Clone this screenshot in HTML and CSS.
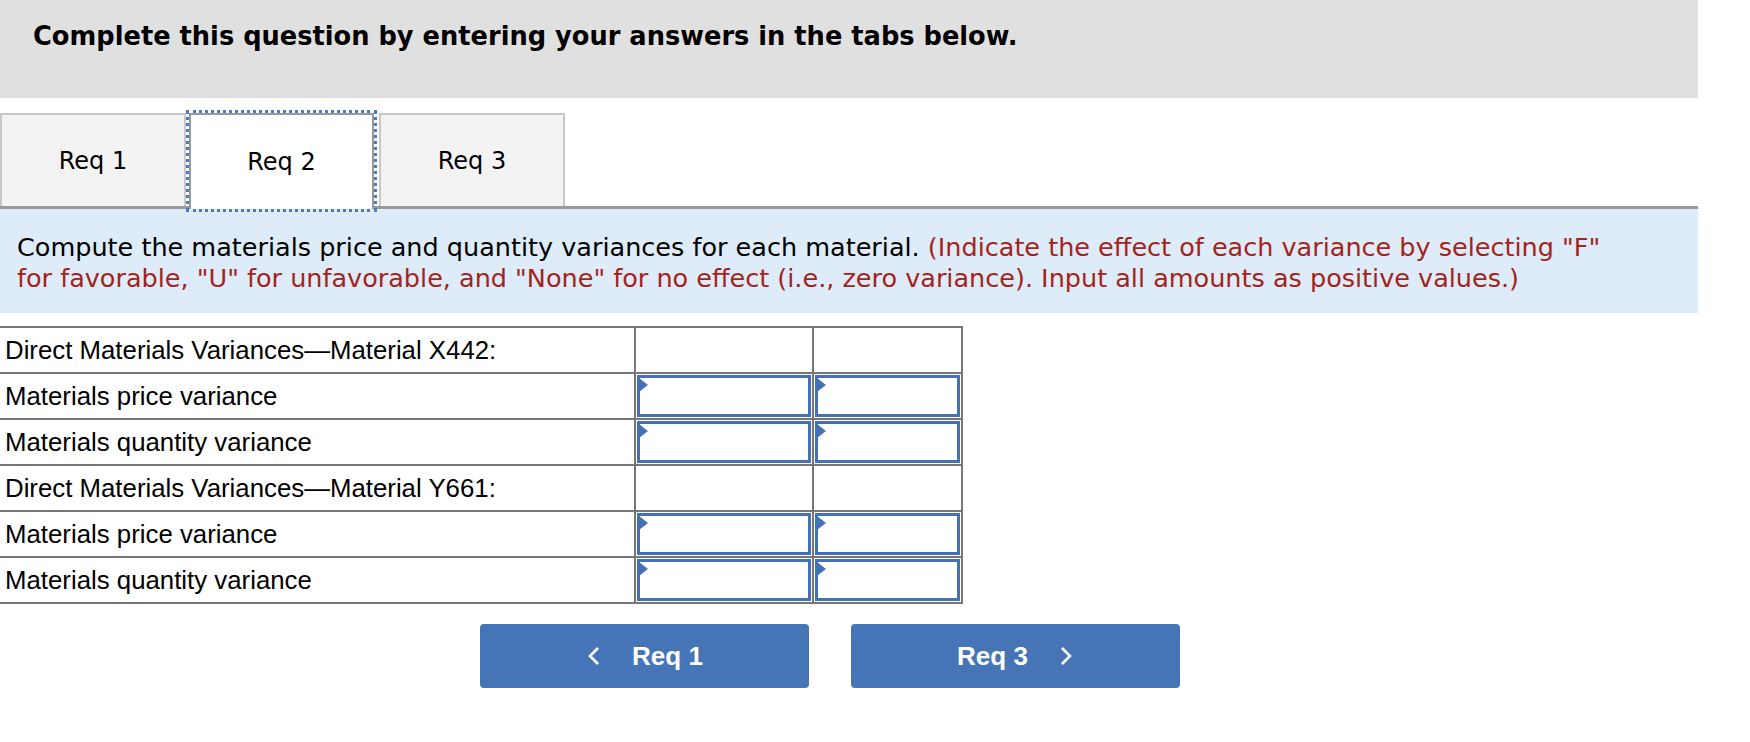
FILE: index.html
```html
<!DOCTYPE html>
<html>
<head>
<meta charset="utf-8">
<link rel="stylesheet" href="styles.css">
</head>
<body>
<div class="page">
  <div class="header">
    <h1 class="title">Complete this question by entering your answers in the tabs below.</h1>
  </div>
  <div class="tabs">
    <div class="tab">Req 1</div>
    <div class="tab active">Req 2</div>
    <div class="tab">Req 3</div>
  </div>
  <div class="instructions">
    <span class="black">Compute the materials price and quantity variances for each material.</span> <span class="red">(Indicate the effect of each variance by selecting "F" for favorable, "U" for unfavorable, and "None" for no effect (i.e., zero variance). Input all amounts as positive values.)</span>
  </div>
  <table class="grid">
    <tr><td class="label">Direct Materials Variances—Material X442:</td><td class="c2"></td><td class="c3"></td></tr>
    <tr><td class="label">Materials price variance</td><td class="c2"><div class="input"></div></td><td class="c3"><div class="input"></div></td></tr>
    <tr><td class="label">Materials quantity variance</td><td class="c2"><div class="input"></div></td><td class="c3"><div class="input"></div></td></tr>
    <tr><td class="label">Direct Materials Variances—Material Y661:</td><td class="c2"></td><td class="c3"></td></tr>
    <tr><td class="label">Materials price variance</td><td class="c2"><div class="input"></div></td><td class="c3"><div class="input"></div></td></tr>
    <tr><td class="label">Materials quantity variance</td><td class="c2"><div class="input"></div></td><td class="c3"><div class="input"></div></td></tr>
  </table>
  <div class="nav">
    <button class="btn"><svg class="chev" width="16" height="22" viewBox="0 0 16 22"><polyline points="12,3 4,11 12,19" fill="none" stroke="#fff" stroke-width="2.6"/></svg><span>Req 1</span></button>
    <button class="btn"><span>Req 3</span><svg class="chev" width="16" height="22" viewBox="0 0 16 22"><polyline points="4,3 12,11 4,19" fill="none" stroke="#fff" stroke-width="2.6"/></svg></button>
  </div>
</div>
</body>
</html>
```
FILE: styles.css
```css
html, body {
  margin: 0;
  padding: 0;
  background: #fff;
}
.page {
  width: 1698px;
}
.header {
  background: #e0e0e0;
  height: 98px;
  box-sizing: border-box;
  padding: 21px 0 0 33px;
}
.title {
  margin: 0;
  font-family: "DejaVu Sans", Verdana, sans-serif;
  font-weight: bold;
  font-size: 25.7px;
  line-height: 30px;
  color: #000;
}
.tabs {
  display: flex;
  margin-top: 15px;
  height: 93px;
  border-bottom: 3px solid #999;
}
.tab {
  width: 186px;
  box-sizing: border-box;
  height: 93px;
  background: #f3f3f3;
  border: 2px solid #c8c8c8;
  border-bottom: none;
  display: flex;
  align-items: center;
  justify-content: center;
  font-family: "DejaVu Sans", Verdana, sans-serif;
  font-size: 24px;
  color: #000;
}
.tab.active {
  width: 185px;
  background: #fff;
  border: 2px solid #999;
  border-bottom: none;
  outline: 3px dotted #4a7cc0;
  outline-offset: 0;
  position: relative;
  z-index: 1;
  margin-left: 3px;
  margin-right: 5px;
  height: 96px;
}
.instructions {
  background: #deebf8;
  padding: 23px 80px 19px 17px;
  font-family: "DejaVu Sans", Verdana, sans-serif;
  font-size: 25.5px;
  line-height: 31px;
  height: 62px;
}
.black { color: #000; }
.red { color: #a3241d; }
.grid {
  margin-top: 13px;
  border-collapse: collapse;
  font-family: "Liberation Sans", Arial, sans-serif;
  font-size: 25.8px;
  color: #000;
}
.grid td {
  border: 2px solid #777;
  height: 46px;
  padding: 0;
  box-sizing: border-box;
}
.grid tr td:first-child {
  border-left: none;
}
.label {
  width: 635px;
  padding-left: 5px !important;
}
.c2 { width: 178px; }
.c3 { width: 149px; }
.input {
  position: relative;
  height: 42px;
  margin: 1px;
  box-sizing: border-box;
  border: 3px solid #4472b4;
  background: #fff;
}
.input::before {
  content: "";
  position: absolute;
  left: -1px;
  top: 0;
  width: 0;
  height: 0;
  border-top: 7px solid transparent;
  border-bottom: 7px solid transparent;
  border-left: 9px solid #4472b4;
}
.nav {
  display: flex;
  gap: 42px;
  margin: 20px 0 0 480px;
}
.btn {
  width: 329px;
  height: 64px;
  background: #4575b6;
  border: none;
  border-radius: 4px;
  color: #fff;
  font-family: "Liberation Sans", Arial, sans-serif;
  font-weight: bold;
  font-size: 26px;
  display: flex;
  align-items: center;
  justify-content: center;
  gap: 30px;
  padding: 0;
}
.chev { display: block; }
```
